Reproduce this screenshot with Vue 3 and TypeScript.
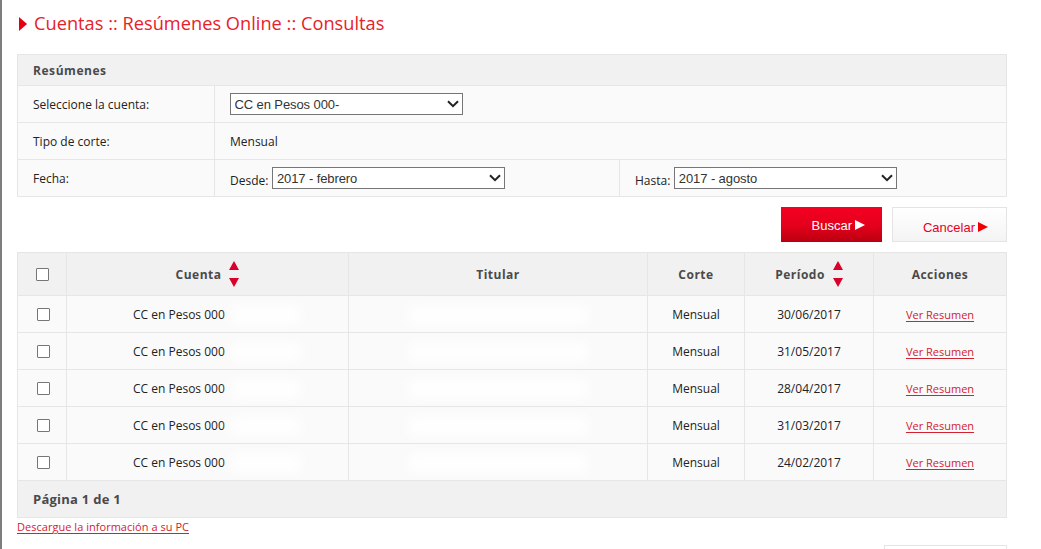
<script setup lang="ts">
interface Row { date: string }
const rows: Row[] = [
  { date: '30/06/2017' },
  { date: '31/05/2017' },
  { date: '28/04/2017' },
  { date: '31/03/2017' },
  { date: '24/02/2017' },
]
</script>

<template>
  <div class="page">
    <h1 class="title"><span class="title-arrow"></span>Cuentas :: Resúmenes Online :: Consultas</h1>

    <section class="panel">
      <div class="panel-head">Resúmenes</div>
      <div class="form-row">
        <div class="label">Seleccione la cuenta:</div>
        <div class="value">
          <select class="sel sel-account"><option>CC en Pesos 000-</option></select>
        </div>
      </div>
      <div class="form-row">
        <div class="label">Tipo de corte:</div>
        <div class="value value-text">Mensual</div>
      </div>
      <div class="form-row">
        <div class="label">Fecha:</div>
        <div class="value value-from">
          <span class="pre">Desde:</span>
          <select class="sel sel-date"><option>2017 - febrero</option></select>
        </div>
        <div class="value value-to">
          <span class="pre">Hasta:</span>
          <select class="sel sel-date"><option>2017 - agosto</option></select>
        </div>
      </div>
    </section>

    <div class="actions">
      <button class="btn btn-primary" type="button">Buscar<span class="tri tri-white"></span></button>
      <button class="btn btn-secondary" type="button">Cancelar<span class="tri tri-red"></span></button>
    </div>

    <section class="grid">
      <div class="tr th">
        <div class="td c-check"><span class="box box-head"></span></div>
        <div class="td c-account">Cuenta<span class="sort"><i class="up"></i><i class="down"></i></span></div>
        <div class="td c-holder">Titular</div>
        <div class="td c-cut">Corte</div>
        <div class="td c-period">Período<span class="sort"><i class="up"></i><i class="down"></i></span></div>
        <div class="td c-actions">Acciones</div>
      </div>
      <div v-for="row in rows" :key="row.date" class="tr tb">
        <div class="td c-check"><span class="box"></span></div>
        <div class="td c-account left">CC en Pesos 000<span class="smudge smudge-account"></span></div>
        <div class="td c-holder"><span class="smudge"></span></div>
        <div class="td c-cut">Mensual</div>
        <div class="td c-period">{{ row.date }}</div>
        <div class="td c-actions"><a class="link" href="#">Ver Resumen</a></div>
      </div>
      <div class="pager">Página 1 de 1</div>
    </section>

    <a class="link download" href="#">Descargue la información a su PC</a>
    <div class="bottom"><span class="btn-stub"></span></div>
  </div>
</template>

<style>
html, body { margin: 0; overflow: hidden; background: #fff; }
</style>

<style scoped>
.page {
  box-sizing: border-box;
  width: 1041px;
  height: 549px;
  overflow: hidden;
  border-left: 2px solid #7d7d7d;
  padding: 0 34px 0 15px;
  font: 12px/1.2 "Open Sans", "Liberation Sans", sans-serif;
  color: #222;
  background: #fff;
}
.title {
  display: flex;
  align-items: center;
  height: 54px;
  margin: 0;
  padding: 0 0 6px 2px;
  box-sizing: border-box;
  font-size: 18.2px;
  letter-spacing: 0.025px;
  font-weight: 400;
  color: #e8202a;
}
.title-arrow {
  width: 0;
  height: 0;
  margin-right: 7px;
  border-left: 8px solid #e60012;
  border-top: 7px solid transparent;
  border-bottom: 7px solid transparent;
}
.panel {
  border: 1px solid #e6e6e6;
  background: #fafafa;
}
.panel-head {
  display: flex;
  align-items: center;
  box-sizing: border-box;
  height: 30px;
  padding: 2px 0 0 15px;
  background: #f1f1f1;
  font-weight: 700;
  color: #4a4a4a;
  letter-spacing: 0.55px;
}
.form-row {
  display: flex;
  height: 36px;
  border-top: 1px solid #e6e6e6;
}
.label {
  display: flex;
  align-items: center;
  box-sizing: border-box;
  width: 197px;
  padding: 2px 0 0 15px;
  border-right: 1px solid #e6e6e6;
}
.value {
  display: flex;
  align-items: center;
  box-sizing: border-box;
  padding-left: 15px;
}
.value-text { padding-top: 2px; }
.value-from {
  width: 405px;
  border-right: 1px solid #e6e6e6;
  gap: 4px;
}
.value-to {
  gap: 4px;
}
.pre {
  position: relative;
  top: 3px;
}
.sel {
  appearance: none;
  box-sizing: border-box;
  height: 22px;
  border: 1px solid #767676;
  border-radius: 0;
  background-color: #fff;
  background-image: url("data:image/svg+xml,%3Csvg xmlns='http://www.w3.org/2000/svg' width='12' height='8'%3E%3Cpath d='M1 1.2 6 6.2 11 1.2' fill='none' stroke='%23222' stroke-width='2'/%3E%3C/svg%3E");
  background-repeat: no-repeat;
  background-position: right 3px center;
  color: #333;
  font: 13px "Liberation Sans", sans-serif;
  letter-spacing: -0.1px;
  padding: 0 0 0 3.5px;
}
.sel-account { width: 233px; }
.sel-date { width: 233px; }
.value-to .sel-date { width: 223px; }
.actions {
  display: flex;
  justify-content: flex-end;
  gap: 10px;
  padding: 10px 0;
}
.btn {
  box-sizing: border-box;
  display: flex;
  align-items: center;
  justify-content: flex-end;
  height: 35px;
  padding: 0;
  border: 0;
  font: 13px "Liberation Sans", sans-serif;
}
.btn-primary {
  width: 101px;
  padding: 1px 17px 0 0;
  color: #fff;
  background: linear-gradient(#f50022 0%, #e4001c 55%, #b80010 100%);
}
.btn-secondary {
  width: 115px;
  padding: 5px 18px 0 0;
  color: #e8001e;
  border: 1px solid #e4e4e4;
  background: linear-gradient(#fff, #f4f4f4);
}
.tri {
  width: 0;
  height: 0;
  margin-left: 3px;
  border-left: 10px solid #fff;
  border-top: 5.5px solid transparent;
  border-bottom: 5.5px solid transparent;
}
.tri-red { border-left-color: #f00000; }
.grid {
  border: 1px solid #e6e6e6;
  background: #fafafa;
}
.tr {
  display: flex;
}
.th {
  height: 42px;
  background: #f1f1f1;
  font-weight: 700;
  color: #4a4a4a;
  letter-spacing: 0.5px;
}
.tb {
  height: 36px;
  border-top: 1px solid #e6e6e6;
}
.td {
  box-sizing: border-box;
  display: flex;
  align-items: center;
  justify-content: center;
  padding-top: 2px;
  border-right: 1px solid #e6e6e6;
  overflow: hidden;
}
.td:last-child { border-right: 0; }
.c-check { width: 49px; padding-top: 0; }
.c-account { width: 282px; }
.c-holder { width: 299px; }
.c-cut { width: 97px; }
.c-period { width: 129px; }
.c-actions { flex: 1; }
.left {
  justify-content: flex-start;
  padding-left: 66px;
}
.box {
  box-sizing: border-box;
  width: 13px;
  height: 13px;
  border: 1px solid #767676;
  border-radius: 1px;
  background: #fff;
  position: relative;
  left: 1px;
}
.box-head { left: 0; }
.sort {
  display: inline-flex;
  flex-direction: column;
  gap: 8px;
  margin: -2px 0 0 8px;
}
.sort i {
  display: block;
  width: 0;
  height: 0;
  border-left: 5.5px solid transparent;
  border-right: 5.5px solid transparent;
}
.up { border-bottom: 9px solid #d9002a; }
.down { border-top: 9px solid #d9002a; }
.smudge {
  display: block;
  width: 180px;
  height: 20px;
  background: rgba(255, 255, 255, 0.85);
  filter: blur(6px);
}
.smudge-account {
  flex: none;
  width: 70px;
  margin-left: 6px;
}
.link {
  color: #d2222f;
  font-size: 11px;
  text-decoration: underline;
  text-underline-offset: 2px;
}
.pager {
  display: flex;
  align-items: center;
  box-sizing: border-box;
  height: 37px;
  padding: 2px 0 0 15px;
  border-top: 1px solid #e6e6e6;
  background: #f1f1f1;
  font-weight: 700;
  font-size: 13px;
  letter-spacing: 0.25px;
  color: #4a4a4a;
}
.download {
  display: block;
  width: fit-content;
  margin-top: 1px;
  line-height: 15px;
  letter-spacing: 0.03px;
}
.bottom {
  display: flex;
  justify-content: flex-end;
  margin-top: 11px;
}
.btn-stub {
  box-sizing: border-box;
  width: 123px;
  height: 35px;
  border: 1px solid #e4e4e4;
}
</style>
